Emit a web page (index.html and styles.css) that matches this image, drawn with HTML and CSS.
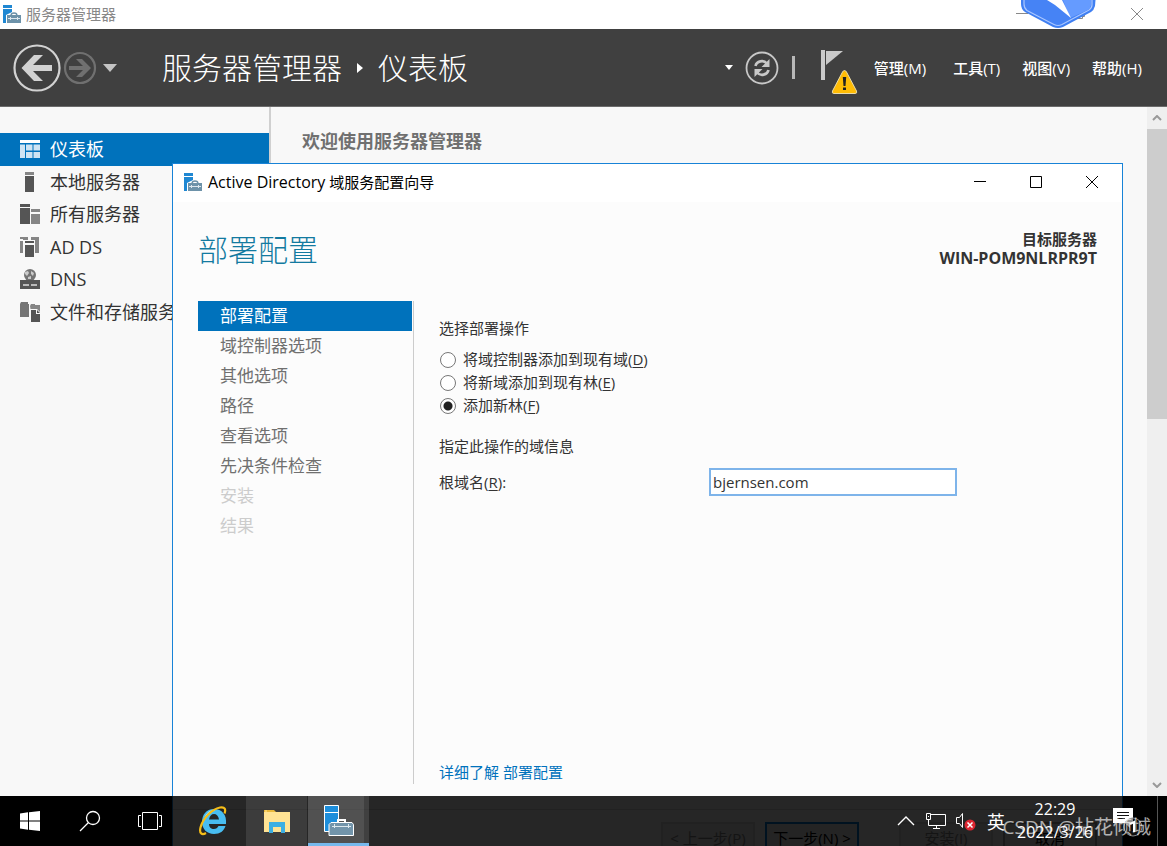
FILE: index.html
```html
<!DOCTYPE html>
<html lang="zh-CN">
<head>
<meta charset="utf-8">
<title>服务器管理器</title>
<link rel="stylesheet" href="styles.css">
</head>
<body>
<svg class="defs" width="0" height="0" aria-hidden="true">
  <symbol id="server-logo" viewBox="0 0 18 18">
    <path fill="#1f87d2" d="M0 0h9v3H0zM0 4h9v3L3 10v8H0z"/>
    <path fill="#6d92a9" d="M4 10h14v8H4z"/>
    <path fill="none" stroke="#6d92a9" stroke-width="1.300" d="M8 10.500Q8 8 11 8t3 2.500"/>
    <path stroke="#dce7ee" d="M5 13.500h12M7.500 12v3M14.500 12v3"/>
  </symbol>
</svg>
<div class="desktop">
  <main class="manager">
    <header class="titlebar">
      <svg class="app-icon"><use href="#server-logo"/></svg>
      <span class="titlebar-text">服务器管理器</span>
      <div class="window-buttons">
        <button aria-label="最小化"><svg width="14" height="14" viewBox="0 0 14 14"><path d="M1 6.500h12"/></svg></button>
        <button aria-label="还原"><svg width="14" height="14" viewBox="0 0 14 14"><path d="M3.500 4.500h7v7h-7zM5.500 4.500v-2h7v7h-2"/></svg></button>
        <button aria-label="关闭"><svg width="14" height="14" viewBox="0 0 14 14"><path d="M1 1l12 12M13 1L1 13"/></svg></button>
      </div>
    </header>
    <nav class="toolbar">
      <button class="nav-button" aria-label="后退"><svg width="48" height="48" viewBox="0 0 48 48"><circle cx="24" cy="24" r="22.500" fill="none" stroke="#d2d2d2" stroke-width="2.200"/><path fill="#d2d2d2" d="M8.500 24L21 11h9l-10 10h19v6H20l10 10h-9z"/></svg></button>
      <button class="nav-button" aria-label="前进"><svg width="34" height="34" viewBox="0 0 34 34"><circle cx="17" cy="17" r="15" fill="none" stroke="#707070" stroke-width="2.200"/><path fill="#707070" d="M28 17l-9 9h-6l7-7H6v-4h14l-7-7h6z"/></svg></button>
      <button class="nav-button history" aria-label="历史记录"><svg width="14" height="8"><path fill="#c4c4c4" d="M0 0h14L7 8z"/></svg></button>
      <h1 class="breadcrumb">服务器管理器<svg width="6" height="10"><path fill="#fff" d="M0 0l6 5-6 5z"/></svg>仪表板</h1>
      <div class="tools">
        <button class="tool drop" aria-label="更多"><svg width="8" height="5"><path fill="#fff" d="M0 0h8L4 5z"/></svg></button>
        <button class="tool refresh" aria-label="刷新"><svg width="34" height="34" viewBox="0 0 34 34"><circle cx="17" cy="17" r="15.500" fill="none" stroke="#c8c8c8" stroke-width="1.800"/><g fill="none" stroke="#c8c8c8" stroke-width="2.600"><path d="M10.500 15c1-5 8-6.500 11.500-2.500M23.500 19c-1 5-8 6.500-11.500 2.500"/></g><path fill="#c8c8c8" d="M24.500 8v8h-8zM9.500 26v-8h8z"/></svg></button>
        <span class="tool-line"></span>
        <button class="tool flag" aria-label="通知"><svg width="38" height="46" viewBox="0 0 38 46"><path fill="#c9c9c9" d="M1 1h4v30H1z"/><path fill="#c9c9c9" d="M6 2h17L6 16z"/><path fill="#ffbc05" stroke="#eadba8" d="M24.500 21.500q-1.200 0-2 1.500L12.500 42q-1 2.500 1.500 2.500h21q2.500 0 1.500-2.500L26.500 23q-.8-1.500-2-1.500z"/><path fill="#222" d="M22.800 28h3.400l-.7 9h-2zM23 38.500h3v2.500h-3z"/></svg></button>
        <button class="menu">管理(M)</button>
        <button class="menu">工具(T)</button>
        <button class="menu">视图(V)</button>
        <button class="menu">帮助(H)</button>
      </div>
    </nav>
    <div class="content">
      <nav class="sidebar">
        <ul class="side-list">
          <li><a class="side-item active" href="#dashboard"><svg width="20" height="18"><path fill="#fff" d="M0 0h20v3H0z"/><path fill="#cfe4f3" d="M0 4.500h5V18H0zM6 4.500h6.500v6H6zM13.500 4.500H20v6h-6.500zM6 12h6.500v6H6zM13.500 12H20v6h-6.500z"/></svg>仪表板</a></li>
          <li><a class="side-item" href="#local"><svg width="20" height="20"><path fill="#858585" d="M5 0h9v3H5z"/><path fill="#555" d="M5 4h9v16H5z"/></svg>本地服务器</a></li>
          <li><a class="side-item" href="#all"><svg width="20" height="20"><path fill="#555" d="M0 0h10v3H0zM0 4h10v16H0z"/><path fill="#858585" d="M11 5h9v3h-9zM11 10h9v10h-9z"/></svg>所有服务器</a></li>
          <li><a class="side-item" href="#adds"><svg width="20" height="20"><path fill="#858585" d="M0 0h8v3H3v13H0V4h3V2H0zM11 0h8v16h-4V3h-4z"/><path fill="#f8f8f8" d="M4 3h11v17H4z"/><path fill="#555" d="M5 4h9v2H5zM5 8h9v12H5z"/></svg>AD DS</a></li>
          <li><a class="side-item" href="#dns"><svg width="20" height="20"><circle cx="10" cy="6" r="6" fill="#757575"/><path fill="#ccc" d="M5 3l3-1 1 2-2 3-2-2zM11 2l3 2-1 3-2-2zM8 8l3-1v3H8z"/><path fill="#555" d="M0 11h20v9H0z"/><path stroke="#ddd" stroke-width="1.500" d="M3 16h6M11 16h6"/></svg>DNS</a></li>
          <li><a class="side-item" href="#files"><svg width="20" height="20"><path fill="#757575" d="M0 2l1-2h7v2h1v13H0z"/><path fill="#858585" d="M10 4l1-2h4v1h5v13h-8z"/><path fill="#f8f8f8" d="M10 7h7l4 4v10H10z"/><path fill="#555" d="M11 8h5v4h4v8h-9zM17 8l3 3h-3z"/></svg>文件和存储服务</a></li>
        </ul>
      </nav>
      <section class="welcome"><h2>欢迎使用服务器管理器</h2></section>
      <div class="scrollbar">
        <button class="scroll-button" aria-label="向上滚动"><svg width="10" height="6"><path d="M1 5l4-4 4 4"/></svg></button>
        <div class="scroll-track"><div class="scroll-thumb"></div></div>
        <button class="scroll-button" aria-label="向下滚动"><svg width="10" height="6"><path d="M1 1l4 4 4-4"/></svg></button>
      </div>
    </div>
  </main>

  <svg class="badge" width="76" height="29" viewBox="0 0 76 29"><path fill="#3f7ff2" d="M1 0h74.500l-.5 6q-1 4-4 6L43 27q-5 2-10 0L5 12Q1 9 1 4z"/><path fill="#4683f5" stroke="#a9c6ff" stroke-width="1.200" d="M4-2h68v7q0 3-3 5L42 24.500q-4 2-8 0L7 10.500Q4 8 4 4z"/><path fill="#659bff" d="M43 0h28v5q0 3-3 5l-18 8z"/><path fill="#fff" d="M27 0l8 5 16 13L42 0z"/></svg>

  <section class="wizard" role="dialog" aria-labelledby="wizard-title">
    <header class="wizard-titlebar">
      <svg class="app-icon"><use href="#server-logo"/></svg>
      <span id="wizard-title"><span class="latin">Active Directory</span> 域服务配置向导</span>
      <div class="wizard-buttons">
        <button aria-label="最小化"><svg width="14" height="14"><path d="M1 6.500h12"/></svg></button>
        <button aria-label="最大化"><svg width="14" height="14"><path d="M1.500 1.500h11v11h-11z"/></svg></button>
        <button aria-label="关闭"><svg width="14" height="14"><path d="M1 1l12 12M13 1L1 13"/></svg></button>
      </div>
    </header>
    <div class="wizard-head">
      <h2>部署配置</h2>
      <p>目标服务器<br><span class="latin">WIN-POM9NLRPR9T</span></p>
    </div>
    <div class="wizard-body">
      <ol class="steps">
        <li class="current">部署配置</li><li>域控制器选项</li><li>其他选项</li><li>路径</li><li>查看选项</li><li>先决条件检查</li><li class="off">安装</li><li class="off">结果</li>
      </ol>
      <form class="form">
        <fieldset>
          <legend>选择部署操作</legend>
          <label><input type="radio" name="op"><span>将域控制器添加到现有域(<u>D</u>)</span></label>
          <label><input type="radio" name="op"><span>将新域添加到现有林(<u>E</u>)</span></label>
          <label><input type="radio" name="op" checked><span>添加新林(<u>F</u>)</span></label>
        </fieldset>
        <p class="info">指定此操作的域信息</p>
        <div class="field">
          <label for="root">根域名(<u>R</u>):</label>
          <input id="root" type="text" value="bjernsen.com">
        </div>
        <a class="more" href="#more">详细了解 部署配置</a>
      </form>
    </div>
    <footer class="wizard-footer">
      <button class="step-button" disabled>&lt; 上一步(<u>P</u>)</button>
      <button class="step-button primary">下一步(<u>N</u>) &gt;</button>
      <button class="step-button install" disabled>安装(<u>I</u>)</button>
      <button class="step-button">取消</button>
    </footer>
  </section>

  <footer class="taskbar">
    <button class="task" aria-label="开始"><svg width="20" height="20"><path fill="#fff" d="M0 2.500L8 1.300V9.500H0zM9 1.200L20 0v9.500H9zM0 10.500h8v8.200L0 17.500zM9 10.500h11V20L9 18.800z"/></svg></button>
    <button class="task" aria-label="搜索"><svg width="22" height="22" fill="none" stroke="#fff" stroke-width="1.300"><circle cx="14" cy="8" r="6.500"/><path d="M9.500 12.500L1 21"/></svg></button>
    <button class="task" aria-label="任务视图"><svg width="26" height="20" fill="none" stroke="#fff"><path d="M5.500 1.500h15v17h-15zM4 4.500H1.500v11H4M22 4.500h2.500v11H22"/></svg></button>
    <button class="task ie" aria-label="Internet Explorer"><svg width="30" height="30" viewBox="0 0 30 30"><path fill="#48bdf1" fill-rule="evenodd" d="M16 3C8 3 4 9 4 16s5 12 12 12c6 0 10-3 11.500-8h-7c-1 2-2.500 3-4.500 3-3 0-5-2-5-5h17C29 9 24 3 16 3zM11 13.500C11.500 10 13.500 8 16 8s4.500 2 5 5.500z"/><path fill="none" stroke="#a5e7ff" d="M7 11q3-7 10-6.500"/><path fill="none" stroke="#f5bd18" stroke-width="2.200" d="M8 27c-4 2.500-7 .5-5.500-5.500C5 12 14 3 22 1.500c5-1 6 2 4.500 6"/></svg></button>
    <button class="task open" aria-label="文件资源管理器"><svg width="27" height="24"><path fill="#e9b93c" d="M1 1h10l2 2v4H1z"/><path fill="#ffe394" d="M1 3h26v20H1z"/><path fill="#f8d16a" d="M2 1h2v2H2z"/><path fill="#3cafe3" d="M6 13h16v11h-4v-6h-8v6H6z"/></svg></button>
    <button class="task selected" aria-label="服务器管理器"><svg width="32" height="32" viewBox="0 0 32 32"><path fill="#1d8edb" stroke="#fff" d="M1.500 1.500h14v26h-14z"/><path stroke="#fff" d="M2 8.500h13"/><path fill="none" stroke="#fff" stroke-width="2" d="M15 19v-3h7v3"/><path fill="#7294aa" stroke="#fff" d="M8 18.500h21l1.500 2v11H6v-11z"/><path stroke="#dce8ee" d="M9 22.500h19M11.500 20v4M25.500 20v4"/></svg></button>
    <div class="tray">
      <button aria-label="显示隐藏的图标"><svg width="18" height="12" fill="none" stroke="#fff" stroke-width="1.400"><path d="M1 10l8-8 8 8"/></svg></button>
      <button aria-label="网络"><svg width="22" height="18" fill="none" stroke="#fff"><path d="M6 2.500h14.500v11h-17V8M1.500 1.500h4v6h-4zM3 4.500h1M11.500 14v3M8 16.500h7"/></svg></button>
      <button aria-label="音量"><svg width="24" height="20" viewBox="0 0 24 20"><path fill="none" stroke="#fff" d="M2.500 6.500h3l3-4v14l-3-4h-3z"/><circle cx="16" cy="14" r="5.500" fill="#dc2530"/><path stroke="#fff" stroke-width="1.500" d="M13.500 11.500l5 5M18.500 11.500l-5 5"/></svg></button>
      <button class="ime">英</button>
      <button class="clock">22:29<br>2022/3/26</button>
      <button class="notify" aria-label="操作中心"><svg width="32" height="32"><path fill="#fff" d="M1 3h20v15h-3v5l-5-5H1z"/><path stroke="#111" d="M5 7.500h12M5 10.500h12M5 13.500h8"/><circle cx="21" cy="22" r="9" fill="#222" fill-opacity=".5" stroke="#888"/><path fill="none" stroke="#fff" stroke-width="2" d="M18 19l4-2v10"/></svg></button>
      <span class="show-desktop"></span>
    </div>
  </footer>
  <span class="watermark">CSDN @拈花倾城</span>
</div>
</body>
</html>
```
FILE: styles.css
```css
* { box-sizing: border-box; }
body {
  margin: 0;
  font-family: "Open Sans", "Noto Sans CJK SC", sans-serif;
  font-size: 15px;
  color: #333;
}
button { border: 0; padding: 0; background: none; font: inherit; color: inherit; }
h1, h2, p, ul, ol, fieldset, legend { margin: 0; padding: 0; border: 0; font-weight: 400; }
ul, ol { list-style: none; }
a { text-decoration: none; }
u { text-underline-offset: 2px; }
svg { display: block; flex: none; }
.defs { position: absolute; }
.latin { font-size: 16px; }

.desktop {
  position: relative;
  height: 100vh;
  overflow: hidden;
  padding-bottom: 50px;
  background: #000005;
}
.manager { display: flex; flex-direction: column; height: 100%; background: #f8f8f8; }
.titlebar { display: flex; align-items: center; height: 29px; padding: 0 0 2px 3px; background: #fff; color: #888; line-height: 26px; }
.app-icon { width: 18px; height: 18px; }
.titlebar-text { margin-left: 5px; }
.window-buttons { display: flex; margin-left: auto; }
.window-buttons button { display: grid; place-items: center; width: 57px; height: 27px; }
.window-buttons button:last-child { width: 60px; }
.window-buttons svg { fill: none; stroke: #888; }

.toolbar { display: flex; align-items: center; height: 78px; padding: 0 25px 0 13px; background: #404040; border-bottom: 1px solid #6b6b6b; color: #fff; }
.nav-button + .nav-button { margin-left: 2px; }
.nav-button.history { margin-left: 6px; }
.breadcrumb { display: flex; align-items: center; gap: 15px; margin-left: 45px; font-size: 30px; font-weight: 300; line-height: 40px; white-space: nowrap; }
.tools { display: flex; align-items: center; margin-left: auto; white-space: nowrap; }
.refresh { margin-left: 12px; }
.tool-line { width: 3px; height: 23px; margin-left: 13px; background: #b8b8b8; }
.flag { margin: 8px 0 0 25px; }
.menu { margin-left: 22px; font-weight: 500; }
.flag + .menu { margin-left: 16px; }
.flag + .menu + .menu { margin-left: 27px; }

.content { display: flex; flex: 1; min-height: 0; }
.sidebar { width: 271px; padding-top: 26px; border-right: 2px solid #d0d0d0; }
.side-list { display: grid; grid-auto-rows: 1fr; height: 195px; }
.side-item { display: flex; align-items: center; gap: 10px; height: 100%; padding-left: 20px; font-size: 18px; line-height: 28px; color: #333; white-space: nowrap; }
.side-item.active { background: #0072bc; color: #fff; }
.welcome { flex: 1; padding: 20px 31px; }
.welcome h2 { font-size: 18px; line-height: 28px; font-weight: 700; color: #707070; }
.scrollbar { display: flex; flex-direction: column; width: 20px; background: #efefef; }
.scroll-button { display: grid; place-items: center; height: 22px; }
.scroll-button svg { fill: none; stroke: #999; stroke-width: 2; }
.scroll-track { flex: 1; }
.scroll-thumb { height: 45%; background: #cdcdcd; }
.badge { position: absolute; top: 0; right: 71px; }

.wizard { position: absolute; top: 163px; right: 44px; bottom: -20px; left: 172px; display: flex; flex-direction: column; background: #fcfcfc; border: 1px solid #1883d7; }
.wizard-titlebar { display: flex; align-items: center; gap: 6px; height: 38px; padding: 0 2px 2px 11px; background: #fff; color: #000; }
.wizard-buttons { display: flex; margin-left: auto; }
.wizard-buttons button { display: grid; place-items: center; width: 56px; height: 36px; }
.wizard-buttons svg { fill: none; stroke: #000; }
.wizard-head { display: flex; justify-content: space-between; height: 99px; padding: 28px 25px 0; }
.wizard-head h2 { font-size: 30px; font-weight: 300; line-height: 40px; color: #137aa0; }
.wizard-head p { font-weight: 700; line-height: 19px; text-align: right; }
.wizard-body { display: flex; flex: 1; padding-left: 25px; }
.steps { width: 216px; border-right: 1px solid #ccc; font-size: 17px; line-height: 30px; color: #707070; }
.steps li { margin-right: 1px; padding-left: 22px; }
.steps .current { background: #0072bc; color: #fff; }
.steps .off { color: #ccc; }
.form { display: flex; flex: 1; flex-direction: column; align-items: flex-start; padding: 16px 25px 0; line-height: 23px; }
.form legend { margin-bottom: 8px; }
.form fieldset label { display: flex; align-items: center; gap: 7px; padding-left: 1px; }
.form input[type="radio"] { appearance: none; width: 16px; height: 16px; margin: 0; border: 1px solid #777; border-radius: 50%; background: #fff; }
.form input[type="radio"]:checked { background: radial-gradient(circle, #222 4px, #fff 5px); }
.info { margin-top: 18px; }
.field { display: flex; align-items: center; margin-top: 10px; }
.field label { width: 270px; }
.field input { width: 248px; height: 28px; padding: 0 2px; border: 2px solid #7eb4ea; background: #fff; font: inherit; color: #333; }
.more { margin-top: auto; color: #0072bc; }
.wizard-footer { display: flex; flex: none; justify-content: flex-end; gap: 10px; height: 56px; margin-top: 25px; padding: 12px 25px 0; border-top: 1px solid #ddd; }
.step-button { width: 94px; height: 30px; border: 2px solid #aaa; background: #eee; color: #000; }
.step-button:disabled { border-color: #ddd; color: #888; }
.step-button.primary { border-color: #0078d7; }
.step-button.install { margin-left: 30px; }

.taskbar { position: absolute; right: 0; bottom: 0; left: 0; display: flex; height: 50px; background: rgba(0, 0, 0, .85); color: #fff; }
.task { display: grid; place-items: center; width: 60px; }
.task.ie { width: 66px; }
.task.open { width: 61px; background: rgba(255, 255, 255, .1); }
.task.selected { width: 61px; margin-left: 1px; background: linear-gradient(90deg, rgba(255, 255, 255, .2) 56px, rgba(255, 255, 255, .12) 56px); border-bottom: 3px solid #76b9ed; }
.tray { display: flex; align-items: center; margin-left: auto; }
.tray button { display: grid; place-items: center; width: 30px; height: 50px; }
.tray .ime { width: 30px; font-size: 18px; }
.tray .clock { display: block; width: 88px; font-size: 16px; line-height: 23px; }
.tray .notify { width: 58px; }
.show-desktop { width: 10px; height: 50px; border-left: 1px solid #555; }
.watermark { position: absolute; right: 16px; bottom: 7px; color: #fff; opacity: .65; font-size: 19px; line-height: 24px; }
```
